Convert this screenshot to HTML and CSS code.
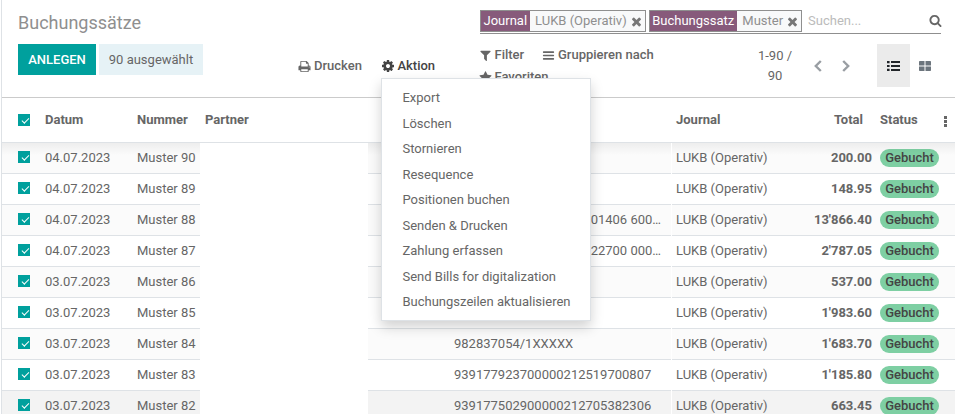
FILE: index.html
```html
<!DOCTYPE html>
<html lang="de">
<head>
<meta charset="utf-8">
<title>Buchungssätze</title>
<link rel="stylesheet" href="styles.css">
</head>
<body>
<svg class="defs" width="0" height="0">
  <symbol id="print" viewBox="0 0 1792 1792"><path d="M448 1536h896v-256h-896v256zm0-640h896v-384h-160q-40 0-68-28t-28-68v-160h-640v640zm1152 64q0-26-19-45t-45-19-45 19-19 45 19 45 45 19 45-19 19-45zm128 0v416q0 13-9.500 22.500t-22.500 9.500h-224v160q0 40-28 68t-68 28h-960q-40 0-68-28t-28-68v-160h-224q-13 0-22.500-9.500t-9.500-22.500v-416q0-79 56.500-135.500t135.500-56.500h64v-544q0-40 28-68t68-28h672q40 0 88 20t76 48l152 152q28 28 48 76t20 88v256h64q79 0 135.500 56.500t56.500 135.500z"/></symbol>
  <symbol id="cog" viewBox="0 0 1792 1792"><path d="M1152 896q0-106-75-181t-181-75-181 75-75 181 75 181 181 75 181-75 75-181zm512-109v222q0 12-8 23t-20 13l-185 28q-19 54-39 91 35 50 107 138 10 12 10 25t-9 23q-27 37-99 108t-94 71q-12 0-26-9l-138-108q-44 23-91 38-16 136-29 186-7 28-36 28h-222q-14 0-24.500-8.500t-11.500-21.500l-28-184q-49-16-90-37l-141 107q-10 9-25 9-14 0-25-11-126-114-165-168-7-10-7-23 0-12 8-23 15-21 51-66.500t54-70.500q-27-50-41-99l-183-27q-13-2-21-12.500t-8-23.500v-222q0-12 8-23t19-13l186-28q14-46 39-92-40-57-107-138-10-12-10-24 0-10 9-23 26-36 98.500-107.500t94.500-71.500q13 0 26 10l138 107q44-23 91-38 16-136 29-186 7-28 36-28h222q14 0 24.500 8.500t11.500 21.500l28 184q49 16 90 37l142-107q9-9 24-9 13 0 25 10 129 119 165 170 7 8 7 22 0 12-8 23-15 21-51 66.500t-54 70.500q26 50 41 98l183 28q13 2 21 12.500t8 23.500z"/></symbol>
  <symbol id="filter" viewBox="0 0 1792 1792"><path d="M1595 295q17 41-14 70l-493 493v742q0 42-39 59-13 5-25 5-27 0-45-19l-256-256q-19-19-19-45v-486l-493-493q-31-29-14-70 17-39 59-39h1280q42 0 59 39z"/></symbol>
  <symbol id="bars" viewBox="0 0 1792 1792"><path d="M128 384q0-64 64-64h1408q64 0 64 64v100q0 64-64 64H192q-64 0-64-64zM128 846q0-64 64-64h1408q64 0 64 64v100q0 64-64 64H192q-64 0-64-64zM128 1308q0-64 64-64h1408q64 0 64 64v100q0 64-64 64H192q-64 0-64-64z"/></symbol>
  <symbol id="star" viewBox="0 0 1792 1792"><path d="M1728 647q0 22-26 48l-363 354 86 500q1 7 1 20 0 21-10.500 35.500t-30.500 14.500q-19 0-40-12l-449-236-449 236q-22 12-40 12-21 0-31.500-14.500t-10.500-35.500q0-6 2-20l86-500-364-354q-25-27-25-48 0-37 56-46l502-73 225-455q19-41 49-41t49 41l225 455 502 73q56 9 56 46z"/></symbol>
  <symbol id="search" viewBox="0 0 1792 1792"><path d="M1216 832q0-185-131.500-316.500t-316.500-131.500-316.500 131.500-131.500 316.500 131.500 316.500 316.500 131.500 316.500-131.500 131.500-316.500zm512 832q0 52-38 90t-90 38q-54 0-90-38l-343-342q-179 124-399 124-143 0-273.500-55.500t-225-150-150-225-55.500-273.500 55.500-273.500 150-225 225-150 273.500-55.500 273.500 55.500 225 150 150 225 55.500 273.500q0 220-124 399l343 343q37 37 37 90z"/></symbol>
  <symbol id="times" viewBox="302 200 1188 1400"><path d="M1490 1322q0 40-28 68l-136 136q-28 28-68 28t-68-28l-294-294-294 294q-28 28-68 28t-68-28l-136-136q-28-28-28-68t28-68l294-294-294-294q-28-28-28-68t28-68l136-136q28-28 68-28t68 28l294 294 294-294q28-28 68-28t68 28l136 136q28 28 28 68t-28 68l-294 294 294 294q28 28 28 68z"/></symbol>
  <symbol id="list" viewBox="0 0 13 10"><path d="M0 0h2.600v2.200H0zM0 3.900h2.600v2.200H0zM0 7.800h2.600V10H0zM4 .1h9v2H4zM4 4h9v2H4zM4 7.900h9v2H4z"/></symbol>
  <symbol id="kanban" viewBox="0 0 12 10"><path d="M.8 0h4.700v4.500H0V.8Q0 0 .8 0zM6.500 0h4.700q.8 0 .8.800v3.700H6.500zM0 5.500h5.500V10H.8Q0 10 0 9.200zM6.500 5.500H12v3.700q0 .8-.8.800H6.500z"/></symbol>
</svg>

<div class="app">
  <header class="panel">
    <div class="left">
      <h1>Buchungssätze</h1>
      <div class="buttons">
        <button class="create">ANLEGEN</button>
        <span class="selected">90 ausgewählt</span>
      </div>
    </div>
    <div class="actions">
      <button class="tool"><svg class="icon wide"><use href="#print"/></svg>Drucken</button>
      <div class="dropdown">
        <button class="tool open"><svg class="icon gear"><use href="#cog"/></svg>Aktion</button>
        <ul class="menu">
          <li>Export</li>
          <li>Löschen</li>
          <li>Stornieren</li>
          <li>Resequence</li>
          <li>Positionen buchen</li>
          <li>Senden &amp; Drucken</li>
          <li>Zahlung erfassen</li>
          <li>Send Bills for digitalization</li>
          <li>Buchungszeilen aktualisieren</li>
        </ul>
      </div>
    </div>
    <div class="right">
      <div class="search">
        <div class="facet"><b>Journal</b><span>LUKB (Operativ)</span><svg class="close"><use href="#times"/></svg></div>
        <div class="facet"><b>Buchungssatz</b><span>Muster</span><svg class="close"><use href="#times"/></svg></div>
        <span class="placeholder">Suchen...</span>
        <svg class="icon magnifier"><use href="#search"/></svg>
      </div>
      <div class="controls">
        <div class="filters">
          <button class="tool filter"><svg class="icon"><use href="#filter"/></svg>Filter</button>
          <button class="tool group"><svg class="icon"><use href="#bars"/></svg>Gruppieren nach</button>
          <button class="tool favorite"><svg class="icon"><use href="#star"/></svg>Favoriten</button>
        </div>
        <div class="pager">1-90 / 90</div>
        <div class="arrows">
          <svg width="8" height="12" viewBox="0 0 8 12"><path d="M6.800 1 1.800 6l5 5"/></svg>
          <svg width="8" height="12" viewBox="0 0 8 12"><path d="m1.200 1 5 5-5 5"/></svg>
        </div>
        <div class="views">
          <span class="view active"><svg width="13" height="10"><use href="#list"/></svg></span>
          <span class="view"><svg width="12" height="10"><use href="#kanban"/></svg></span>
        </div>
      </div>
    </div>
  </header>

  <main class="list">
    <div class="row head">
      <span class="c"><i class="check"></i></span><span>Datum</span><span>Nummer</span><span class="partner">Partner</span><span class="ref"></span><span class="journal">Journal</span><span class="total">Total</span><span class="status">Status</span><span class="more"><i></i><i></i><i></i></span>
    </div>
    <div class="rows" id="rows"></div>
  </main>
</div>
<script src="list.js"></script>
</body>
</html>
```
FILE: styles.css
```css
* { box-sizing: border-box; }
body {
  margin: 0;
  height: 414px;
  overflow: hidden;
  background: #fff;
  color: #666;
  font: 13px/19.5px Roboto, sans-serif;
}
.defs { display: block; }
button { border: 0; background: none; font: inherit; color: inherit; padding: 0; }
.app { margin-left: 1px; border-left: 1px solid #dee2e6; height: 414px; overflow: hidden; }
.panel {
  display: grid;
  grid-template-columns: 290px 172px 1fr;
  height: 98px;
  padding: 0 14px 0 16px;
  border-bottom: 1px solid #cbcbcb;
}
h1 { margin: 9px 0 8px; font-size: 18px; line-height: 27px; font-weight: 400; color: #8f8f8f; }
.buttons { display: flex; gap: 3px; }
.create { width: 78px; height: 31px; background: #00a09d; color: #fff; font-weight: 500; }
.selected { width: 104px; height: 31px; line-height: 31px; text-align: center; background: #e6f2f6; }
.actions { display: flex; gap: 20px; padding-top: 56px; margin-left: -10px; }
.tool { display: flex; align-items: center; height: 20px; font-weight: 500; white-space: nowrap; }
.open { color: #444; }
.icon { width: 13px; height: 13px; fill: currentColor; margin-right: 2px; flex: none; }
.wide { width: 13px; height: 13px; margin-right: 3px; }
.gear { width: 14px; height: 14px; margin: 0 2.5px 0 -1px; }
.dropdown { position: relative; }
.menu {
  position: absolute;
  z-index: 5;
  left: -1px;
  top: 22px;
  width: 210px;
  height: 243px;
  margin: 0;
  padding: 6px 0;
  list-style: none;
  background: #fff;
  border: 1px solid #dee2e6;
  box-shadow: 0 6px 12px rgba(0, 0, 0, .18);
}
.menu li { padding: 3px 20.5px; height: 25.5px; white-space: nowrap; }
.search {
  display: flex;
  align-items: center;
  height: 24px;
  margin-top: 10px;
  padding-bottom: 1px;
  border-bottom: 1px solid #8f8f8f;
}
.facet { display: flex; align-items: center; height: 22px; border: 1px solid #8f8f8f; background: #f8f9fa; color: #8f8f8f; margin-right: 3px; white-space: nowrap; }
.facet b { align-self: stretch; padding: 0 3px 0 2.5px; line-height: 19px; background: #875a7b; color: #fff; font-weight: 400; }
.facet span { align-self: stretch; padding: 0 5px; line-height: 19px; }
.facet .close { width: 9px; height: 11px; margin: 1px 4px 0 0; fill: #777; }
.placeholder { color: #bbb; padding-left: 3px; flex: 1; }
.magnifier { margin: 0 -1px 2px 0; }
.controls { display: flex; height: 44px; margin-top: 10px; }
.filters { display: flex; flex-wrap: wrap; align-content: flex-start; width: 200px; margin: 0 59px 0 -1px; row-gap: 2px; padding-top: 1px; }
.filters .icon { margin-right: 2.5px; }
.filter { width: 63px; }
.group .icon { margin-right: 3px; }
.pager { width: 72px; padding: 2px 15px 0 17px; text-align: center; }
.arrows { display: flex; gap: 20px; padding: 16px 0 0 4px; width: 67px; }
.arrows path { fill: none; stroke: #999ea3; stroke-width: 2.400; }
.views { display: flex; }
.view { display: flex; align-items: center; justify-content: center; width: 33px; height: 43px; color: #6c757d; fill: currentColor; }
.view:last-child { width: 30px; }
.active { background: #ebebeb; color: #212529; }
.row {
  display: grid;
  grid-template-columns: 43px 92px 63px 168px 303px 1px 125px 75px 1fr;
  height: 31px;
  line-height: 30px;
  background: linear-gradient(#dee2e6, #dee2e6) bottom / 100% 1px no-repeat;
  white-space: nowrap;
}
.row:nth-child(odd) { background-color: #fbfbfb; }
.row.head { grid-template-columns: 43px 92px 68px 163px 303px 127px 76px 57px 1fr; height: 45px; line-height: 44px; font-weight: 700; background-color: #fff; }
.row:last-child.hover { background-color: #f3f3f3; }
.rows { position: relative; }
.rows::before { content: ""; position: absolute; left: 0; right: 0; top: 0; height: 12px; background: linear-gradient(rgba(0, 0, 0, .055), transparent); }
.c { display: flex; align-items: center; padding: 0 0 3px 16px; }
.check { width: 12px; height: 12px; background: #00a09d; }
.check::after { content: ""; display: block; width: 5.5px; height: 3px; margin: 3.5px 0 0 3.5px; border: solid #fff; border-width: 0 0 1.500px 1.500px; transform: rotate(-45deg); }
.row.head .c { padding-bottom: 1px; }
.blank, .seam { position: relative; background: #fff; }
.ref { padding: 0 10px 0 86px; overflow: hidden; }
.ref.clipped { text-align: right; }
.rows .journal { padding-left: 4px; }
.head .journal { padding-left: 5px; }
.total { text-align: right; font-weight: 700; }
.head .total { padding-right: 11px; }
.head .status { padding-left: 6px; }
.rows .status { padding: 6px 0 0 8px; }
.badge { display: block; width: 59px; height: 18px; border-radius: 9px; background: #7ecfa3; color: #444; font-weight: 500; line-height: 18px; text-align: center; }
.more { display: flex; flex-direction: column; gap: 1px; padding: 18px 0 0 13px; }
.more i { width: 3px; height: 3px; background: #666; }
```
FILE: list.js
```js
const entries = [
  ["04.07.2023", "90", "", "200.00"],
  ["04.07.2023", "89", "", "148.95"],
  ["04.07.2023", "88", "01406 600…", "13'866.40"],
  ["04.07.2023", "87", "22700 000…", "2'787.05"],
  ["03.07.2023", "86", "", "537.00"],
  ["03.07.2023", "85", "", "1'983.60"],
  ["03.07.2023", "84", "982837054/1XXXXX", "1'683.70"],
  ["03.07.2023", "83", "939177923700000212519700807", "1'185.80"],
  ["03.07.2023", "82", "939177502900000212705382306", "663.45"],
];
document.getElementById("rows").innerHTML = entries.map(([date, number, ref, total], i) => `
  <div class="row${i === entries.length - 1 ? " hover" : ""}">
    <span class="c"><i class="check"></i></span><span>${date}</span><span>Muster ${number}</span><span class="blank"></span><span class="ref${ref.endsWith("…") ? " clipped" : ""}">${ref}</span><span class="seam"></span><span class="journal">LUKB (Operativ)</span><span class="total">${total}</span><span class="status"><span class="badge">Gebucht</span></span>
  </div>`).join("");
```
